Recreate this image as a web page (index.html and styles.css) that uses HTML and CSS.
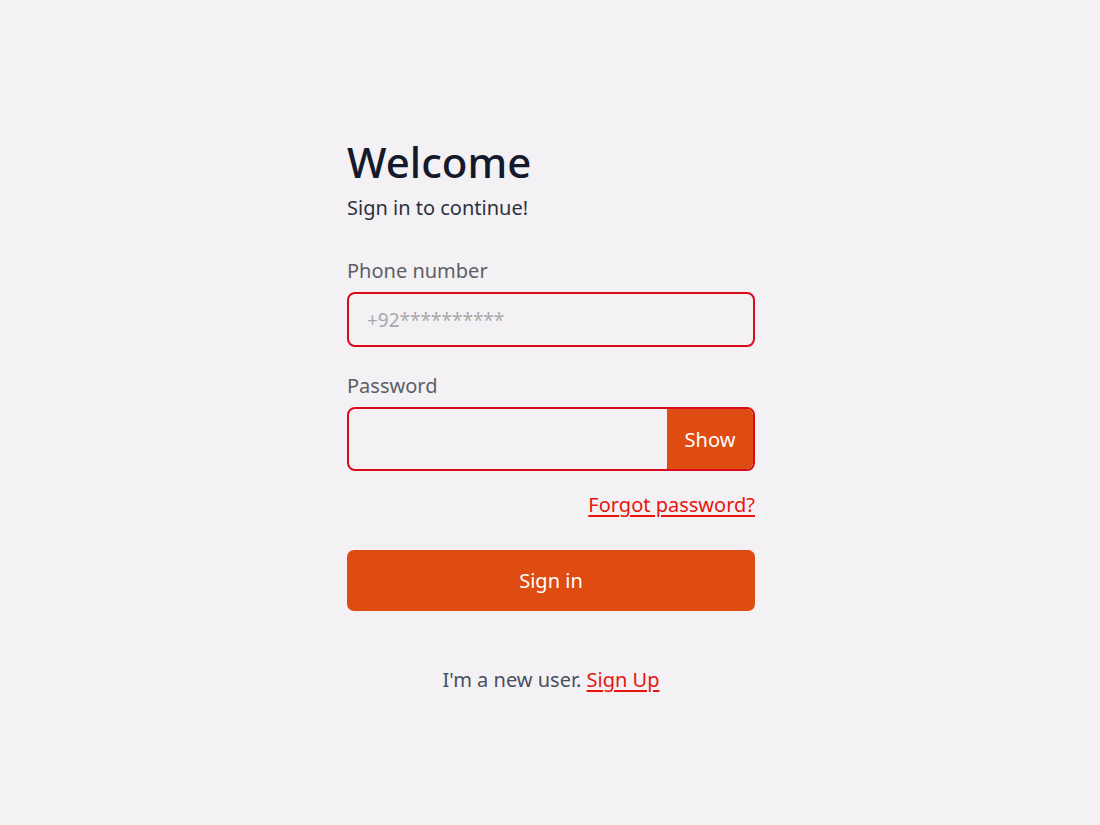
FILE: index.html
```html
<!DOCTYPE html>
<html lang="en">
<head>
<meta charset="utf-8">
<title>Sign in</title>
<link rel="stylesheet" href="styles.css">
</head>
<body>
<main class="page">
  <form class="card">
    <h1 class="title">Welcome</h1>
    <p class="subtitle">Sign in to continue!</p>

    <label class="label" for="phone">Phone number</label>
    <div class="field field-phone">
      <input id="phone" class="input" type="text" placeholder="+92**********">
    </div>

    <label class="label label-password" for="password">Password</label>
    <div class="field field-password">
      <input id="password" class="input" type="password">
      <button type="button" class="show-btn">Show</button>
    </div>

    <div class="forgot-row">
      <a href="#" class="link">Forgot password?</a>
    </div>

    <button type="button" class="submit">Sign in</button>

    <p class="signup">I'm a new user. <a href="#" class="link">Sign Up</a></p>
  </form>
</main>
</body>
</html>
```

FILE: styles.css
```css
* { box-sizing: border-box; }
html, body {
  margin: 0;
  padding: 0;
  background: #f3f1f4;
  font-family: "Noto Sans", "Open Sans", sans-serif;
}
.page {
  display: flex;
  justify-content: center;
  padding-top: 136px;
  padding-left: 2px;
}
.card {
  width: 408px;
  display: flex;
  flex-direction: column;
}
.title {
  margin: 0;
  font-size: 42px;
  font-weight: 500;
  line-height: 52px;
  color: #141a2c;
}
.subtitle {
  margin: 7px 0 0;
  font-size: 20px;
  line-height: 26px;
  color: #2b3140;
}
.label {
  margin-top: 37px;
  font-size: 20px;
  line-height: 26px;
  color: #5d5f66;
}
.label-password { margin-top: 26px; }
.field {
  margin-top: 8px;
  display: flex;
  border: 2px solid #d90a1c;
  border-radius: 8px;
  overflow: hidden;
  background: #f3f1f4;
}
.field-phone { height: 55px; }
.field-password { height: 64px; }
.input {
  flex: 1;
  min-width: 0;
  border: 0;
  outline: 0;
  background: transparent;
  padding: 0 18px;
  font-family: inherit;
  font-size: 19px;
  color: #333;
}
.input::placeholder { color: #a9a9ab; }
.show-btn {
  width: 86px;
  border: 0;
  background: #df4c12;
  color: #fff;
  font-family: inherit;
  font-size: 20px;
  padding: 0;
}
.forgot-row {
  margin-top: 21px;
  display: flex;
  justify-content: flex-end;
}
.link {
  color: #e8150f;
  font-size: 20px;
  line-height: 26px;
  text-decoration: underline;
  text-underline-offset: 3px;
}
.submit {
  margin-top: 32px;
  height: 61px;
  border: 0;
  border-radius: 7px;
  background: #df4c12;
  color: #fff;
  font-family: inherit;
  font-size: 20px;
}
.signup {
  margin: 56px 0 0;
  text-align: center;
  font-size: 20px;
  line-height: 26px;
  color: #4a4f5c;
}
```
